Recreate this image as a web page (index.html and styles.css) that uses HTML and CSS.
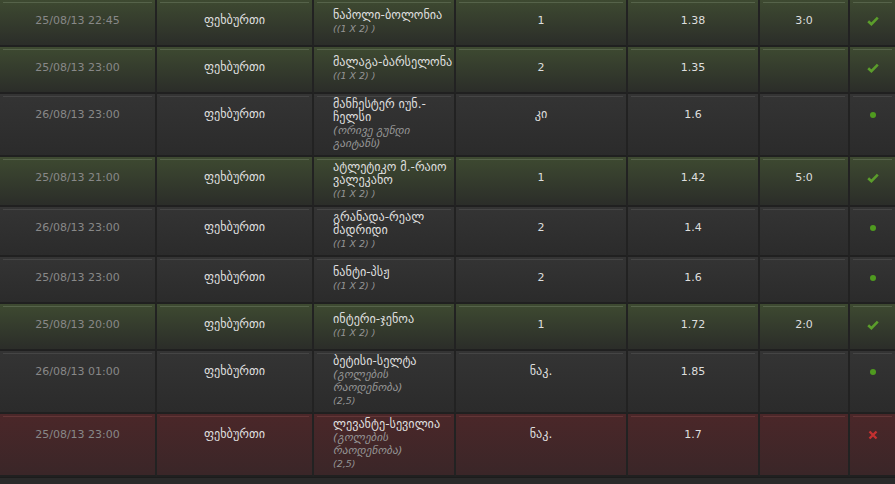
FILE: index.html
```html
<!DOCTYPE html>
<html lang="ka">
<head>
    <meta charset="UTF-8">
    <title>ბილეთები</title>
    <link rel="stylesheet" href="styles.css">
</head>
<body>
    <table class="bets">
        <colgroup>
            <col class="c-date">
            <col class="c-sport">
            <col class="c-match">
            <col class="c-pick">
            <col class="c-odds">
            <col class="c-score">
            <col class="c-state">
        </colgroup>
        <tr class="won">
            <td class="date">25/08/13 22:45</td>
            <td class="ka">ფეხბურთი</td>
            <td class="match"><div class="teams">ნაპოლი-ბოლონია</div><div class="kind">((1 X 2) )</div></td>
            <td>1</td>
            <td>1.38</td>
            <td>3:0</td>
            <td class="state"><svg viewBox="0 0 12 10" width="12" height="10"><path class="ok" d="M1.2 5.2 L4.4 8.2 L10.8 1.6"/></svg></td>
        </tr>
        <tr class="won">
            <td class="date">25/08/13 23:00</td>
            <td class="ka">ფეხბურთი</td>
            <td class="match"><div class="teams">მალაგა-ბარსელონა</div><div class="kind">((1 X 2) )</div></td>
            <td>2</td>
            <td>1.35</td>
            <td></td>
            <td class="state"><svg viewBox="0 0 12 10" width="12" height="10"><path class="ok" d="M1.2 5.2 L4.4 8.2 L10.8 1.6"/></svg></td>
        </tr>
        <tr class="open">
            <td class="date">26/08/13 23:00</td>
            <td class="ka">ფეხბურთი</td>
            <td class="match"><div class="teams">მანჩესტერ იუნ.-ჩელსი</div><div class="kind"><span class="ka">(ორივე გუნდი გაიტანს)</span></div></td>
            <td class="ka">კი</td>
            <td>1.6</td>
            <td></td>
            <td class="state"><svg viewBox="0 0 12 10" width="12" height="10"><circle class="dot" cx="6" cy="5" r="3"/></svg></td>
        </tr>
        <tr class="won">
            <td class="date">25/08/13 21:00</td>
            <td class="ka">ფეხბურთი</td>
            <td class="match"><div class="teams">ატლეტიკო მ.-რაიო ვალეკანო</div><div class="kind">((1 X 2) )</div></td>
            <td>1</td>
            <td>1.42</td>
            <td>5:0</td>
            <td class="state"><svg viewBox="0 0 12 10" width="12" height="10"><path class="ok" d="M1.2 5.2 L4.4 8.2 L10.8 1.6"/></svg></td>
        </tr>
        <tr class="open">
            <td class="date">26/08/13 23:00</td>
            <td class="ka">ფეხბურთი</td>
            <td class="match"><div class="teams">გრანადა-რეალ მადრიდი</div><div class="kind">((1 X 2) )</div></td>
            <td>2</td>
            <td>1.4</td>
            <td></td>
            <td class="state"><svg viewBox="0 0 12 10" width="12" height="10"><circle class="dot" cx="6" cy="5" r="3"/></svg></td>
        </tr>
        <tr class="open">
            <td class="date">25/08/13 23:00</td>
            <td class="ka">ფეხბურთი</td>
            <td class="match"><div class="teams">ნანტი-პსჟ</div><div class="kind">((1 X 2) )</div></td>
            <td>2</td>
            <td>1.6</td>
            <td></td>
            <td class="state"><svg viewBox="0 0 12 10" width="12" height="10"><circle class="dot" cx="6" cy="5" r="3"/></svg></td>
        </tr>
        <tr class="won">
            <td class="date">25/08/13 20:00</td>
            <td class="ka">ფეხბურთი</td>
            <td class="match"><div class="teams">ინტერი-ჯენოა</div><div class="kind">((1 X 2) )</div></td>
            <td>1</td>
            <td>1.72</td>
            <td>2:0</td>
            <td class="state"><svg viewBox="0 0 12 10" width="12" height="10"><path class="ok" d="M1.2 5.2 L4.4 8.2 L10.8 1.6"/></svg></td>
        </tr>
        <tr class="open">
            <td class="date">26/08/13 01:00</td>
            <td class="ka">ფეხბურთი</td>
            <td class="match"><div class="teams">ბეტისი-სელტა</div><div class="kind"><span class="ka">(გოლების რაოდენობა)</span><br>(2,5)</div></td>
            <td class="ka">ნაკ.</td>
            <td>1.85</td>
            <td></td>
            <td class="state"><svg viewBox="0 0 12 10" width="12" height="10"><circle class="dot" cx="6" cy="5" r="3"/></svg></td>
        </tr>
        <tr class="lost">
            <td class="date">25/08/13 23:00</td>
            <td class="ka">ფეხბურთი</td>
            <td class="match"><div class="teams">ლევანტე-სევილია</div><div class="kind"><span class="ka">(გოლების რაოდენობა)</span><br>(2,5)</div></td>
            <td class="ka">ნაკ.</td>
            <td>1.7</td>
            <td></td>
            <td class="state"><svg viewBox="0 0 12 10" width="12" height="10"><path class="no" d="M2.5 1.5 L9.5 8.5 M9.5 1.5 L2.5 8.5"/></svg></td>
        </tr>
    </table>
</body>
</html>
```
FILE: styles.css
```css
*{
    margin: 0;
    padding: 0;
}
body{
    background-color: #2a2a2a;
    font-family: "DejaVu Sans", sans-serif;
    font-size: 11px;
    color: #dedede;
}
.bets{
    width: 895px;
    table-layout: fixed;
    border-collapse: separate;
    border-spacing: 0;
    border-bottom: 1px solid #1c1c1c;
}
.c-date{ width: 157px; }
.c-sport{ width: 157px; }
.c-match{ width: 142px; }
.c-pick{ width: 172px; }
.c-odds{ width: 132px; }
.c-score{ width: 90px; }
.c-state{ width: 45px; }
.bets td{
    box-sizing: border-box;
    height: 47px;
    padding: 14px 0 5px;
    line-height: 13px;
    text-align: center;
    vertical-align: top;
    border-right: 2px solid #222;
    border-bottom: 2px solid #202020;
}
.bets td:last-child{
    border-right: none;
}
.bets .date{
    color: #888;
}
/* georgian glyphs run wider in the original font */
.ka,
.teams{
    font-size: 12.2px;
}
.bets .match{
    text-align: left;
    vertical-align: middle;
    padding: 4px 0 5px 19px;
}
.kind{
    font-size: 9.5px;
    font-style: italic;
    color: #959595;
}
.kind .ka{
    font-size: 11.3px;
}
.bets .state{
    padding-top: 16px;
}
.state svg{
    display: block;
    margin: 0 auto;
}
.ok{
    fill: none;
    stroke: #5b9d2b;
    stroke-width: 2.6;
}
.dot{
    fill: #4f9a1f;
}
.no{
    fill: none;
    stroke: #c33131;
    stroke-width: 2.4;
}
.won td{
    background:
        linear-gradient(#56634a, #56634a) no-repeat 3px 2px / calc(100% - 6px) 1px,
        linear-gradient(#3e4a31, #2b2d29);
}
.open td{
    background:
        linear-gradient(#454545, #454545) no-repeat 3px 2px / calc(100% - 6px) 1px,
        linear-gradient(#343434, #2b2b2b);
}
.lost td{
    background:
        linear-gradient(#633637, #633637) no-repeat 3px 2px / calc(100% - 6px) 1px,
        linear-gradient(#4b2729, #3a2628);
}
```
